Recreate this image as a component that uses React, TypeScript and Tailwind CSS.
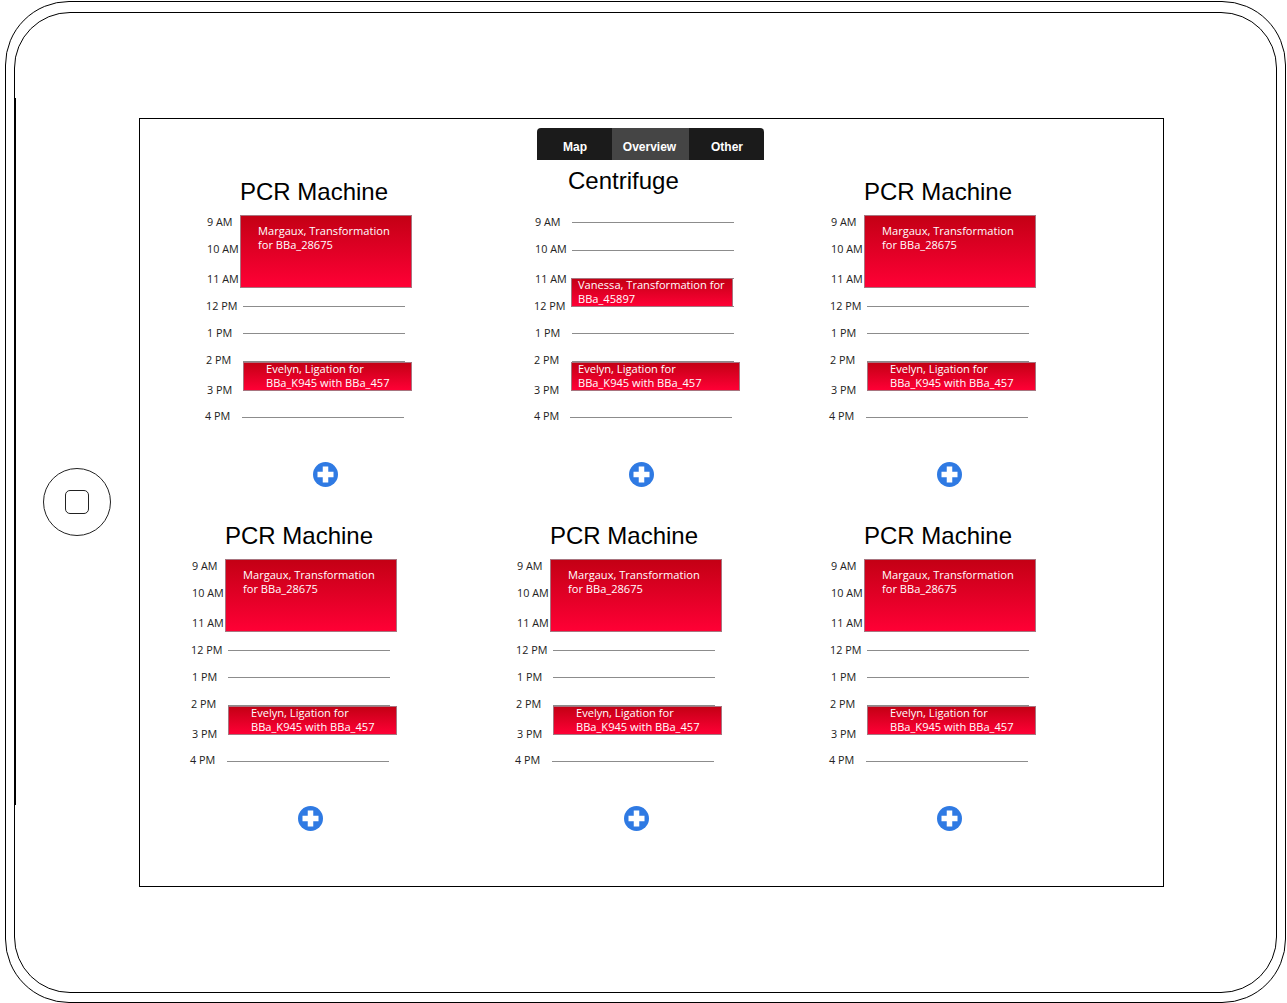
const LABEL_FONT = "font-['Open_Sans',sans-serif]";

type Ev = { cls: string; text: string[] };
type Row = { label: string; rowCls: string; labelCls: string; lineCls: string };

const rowsA: Row[] = [
  { label: "9 AM", rowCls: "h-[28px]", labelCls: "w-[38px] pl-[2px]", lineCls: "w-[162px]" },
  { label: "10 AM", rowCls: "h-[28px]", labelCls: "w-[38px] pl-[2px] mb-[2px]", lineCls: "w-[162px]" },
  { label: "11 AM", rowCls: "h-[28px]", labelCls: "w-[38px] pl-[2px] mt-[2px]", lineCls: "w-[162px]" },
  { label: "12 PM", rowCls: "h-[28px]", labelCls: "w-[38px] pl-[1px]", lineCls: "w-[162px]" },
  { label: "1 PM", rowCls: "h-[27px]", labelCls: "w-[38px] pl-[2px] mb-[2px]", lineCls: "w-[162px]" },
  { label: "2 PM", rowCls: "h-[28px]", labelCls: "w-[38px] pl-[1px] mb-[2px]", lineCls: "w-[162px]" },
  { label: "3 PM", rowCls: "h-[28px]", labelCls: "w-[38px] pl-[2px] mt-[2px]", lineCls: "w-[162px]" },
  { label: "4 PM", rowCls: "h-[28px]", labelCls: "w-[37px] mb-[2px]", lineCls: "w-[162px]" },
];

const rowsB: Row[] = [
  { label: "9 AM", rowCls: "h-[28px]", labelCls: "w-[38px] pl-[1px]", lineCls: "w-[162px]" },
  { label: "10 AM", rowCls: "h-[28px]", labelCls: "w-[38px] pl-[1px] mb-[2px]", lineCls: "w-[162px]" },
  { label: "11 AM", rowCls: "h-[28px]", labelCls: "w-[38px] pl-[1px] mt-[2px]", lineCls: "w-[162px]" },
  { label: "12 PM", rowCls: "h-[28px]", labelCls: "w-[38px]", lineCls: "w-[162px]" },
  { label: "1 PM", rowCls: "h-[27px]", labelCls: "w-[38px] pl-[1px] mb-[2px]", lineCls: "w-[162px]" },
  { label: "2 PM", rowCls: "h-[28px]", labelCls: "w-[38px] mb-[2px]", lineCls: "w-[162px]" },
  { label: "3 PM", rowCls: "h-[28px]", labelCls: "w-[38px] mt-[2px]", lineCls: "w-[162px]" },
  { label: "4 PM", rowCls: "h-[28px]", labelCls: "w-[36px] mb-[2px]", lineCls: "w-[162px]" },
];

const eventsA: Ev[] = [
  { cls: "left-[35px] top-[7px] w-[172px] h-[73px] pl-[17px] pt-[9px]", text: ["Margaux, Transformation", "for BBa_28675"] },
  { cls: "left-[38px] top-[154px] w-[169px] h-[29px] pl-[22px]", text: ["Evelyn, Ligation for", "BBa_K945 with BBa_457"] },
];

const eventsB: Ev[] = [
  { cls: "left-[37px] top-[70px] w-[162px] h-[29px] pl-[6px]", text: ["Vanessa, Transformation for", "BBa_45897"] },
  { cls: "left-[37px] top-[154px] w-[169px] h-[29px] pl-[6px]", text: ["Evelyn, Ligation for", "BBa_K945 with BBa_457"] },
];

function PlusIcon() {
  return (
    <svg width="25" height="25" viewBox="0 0 25 25">
      <circle cx="12.5" cy="12.5" r="12.5" fill="#2f7ae3" />
      <rect x="4.5" y="9.75" width="16" height="5.5" fill="#ffffff" />
      <rect x="9.75" y="4.5" width="5.5" height="16" fill="#ffffff" />
    </svg>
  );
}

function Panel(props: {
  title: string;
  widthCls: string;
  titleCls: string;
  plusCls: string;
  rows: Row[];
  events: Ev[];
}) {
  return (
    <section className={`shrink-0 ${props.widthCls}`}>
      <h2
        className={`h-[48px] flex items-end font-['Liberation_Sans',sans-serif] text-[24px] leading-[28px] text-black ${props.titleCls}`}
      >
        {props.title}
      </h2>
      <div className="relative w-[240px]">
        {props.rows.map((r) => (
          <div key={r.label} className={`flex items-center ${r.rowCls}`}>
            <span className={`shrink-0 ${LABEL_FONT} text-[10.8px] leading-[14px] text-[#222] whitespace-nowrap ${r.labelCls}`}>
              {r.label}
            </span>
            <div className={`h-px bg-[#8c8c8c] ${r.lineCls}`} />
          </div>
        ))}
        {props.events.map((e) => (
          <div
            key={e.text[0]}
            className={`absolute border border-[#a8747f] bg-gradient-to-b from-[#c40014] to-[#ff0035] ${LABEL_FONT} text-[11.1px] leading-[14px] text-white whitespace-nowrap ${e.cls}`}
          >
            <div className="-mt-px">
              {e.text.map((t) => (
                <div key={t}>{t}</div>
              ))}
            </div>
          </div>
        ))}
      </div>
      <div className={`mt-[31px] h-[25px] ${props.plusCls}`}>
        <PlusIcon />
      </div>
    </section>
  );
}

function Tabs() {
  return (
    <nav className="ml-[397px] mt-[9px] flex h-[32px] w-[227px] overflow-hidden rounded-t-[4px] bg-[#1b1b1b] font-['Liberation_Sans',sans-serif] text-[12px] font-bold text-white">
      <div className="flex w-[75px] items-end justify-center pb-[4px] pl-[1px]">Map</div>
      <div className="flex w-[77px] items-end justify-center bg-[#454545] pb-[4px] pr-[2px]">Overview</div>
      <div className="flex w-[75px] items-end justify-center pb-[4px] pl-[1px]">Other</div>
    </nav>
  );
}

export default function App() {
  return (
    <div className="h-[1003px] w-[1287px] overflow-hidden bg-white pl-[5px] pt-[1px]">
      <div className="h-[1002px] w-[1281px] rounded-[64px] border border-black pl-[8px] pt-[10px]">
        <div className="relative h-[981px] w-[1263px] rounded-[56px] border border-black pl-[124px] pt-[105px]">
          <div className="absolute left-[-1px] top-[85px] h-[707px] w-[2px] bg-black" />
          <div className="absolute left-[28px] top-[455px] flex h-[68px] w-[68px] items-center justify-center rounded-full border border-[#222]">
            <div className="h-[24px] w-[24px] rounded-[5px] border border-[#222]" />
          </div>

          <main className="h-[769px] w-[1025px] border border-black bg-white">
            <Tabs />
            <div className="flex h-[344px] pl-[65px]">
              <Panel title="PCR Machine" widthCls="w-[329px]" titleCls="pl-[35px] pb-[2px]" plusCls="ml-[108px]" rows={rowsA} events={eventsA} />
              <Panel title="Centrifuge" widthCls="w-[295px]" titleCls="pl-[34px] pb-[13px]" plusCls="ml-[95px]" rows={rowsB} events={eventsB} />
              <Panel title="PCR Machine" widthCls="w-[240px]" titleCls="pl-[35px] pb-[2px]" plusCls="ml-[108px]" rows={rowsA} events={eventsA} />
            </div>
            <div className="flex h-[344px] pl-[50px]">
              <Panel title="PCR Machine" widthCls="w-[325px]" titleCls="pl-[35px] pb-[2px]" plusCls="ml-[108px]" rows={rowsA} events={eventsA} />
              <Panel title="PCR Machine" widthCls="w-[314px]" titleCls="pl-[35px] pb-[2px]" plusCls="ml-[109px]" rows={rowsA} events={eventsA} />
              <Panel title="PCR Machine" widthCls="w-[240px]" titleCls="pl-[35px] pb-[2px]" plusCls="ml-[108px]" rows={rowsA} events={eventsA} />
            </div>
          </main>
        </div>
      </div>
    </div>
  );
}
